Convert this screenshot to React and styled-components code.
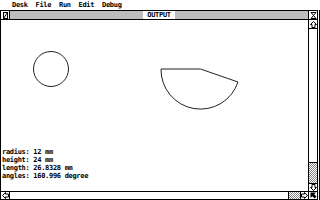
import React from "react";
import styled, { createGlobalStyle } from "styled-components";

const Global = createGlobalStyle`
  html, body { margin: 0; padding: 0; background: #fff; }
  body { font-family: "DejaVu Sans Mono", "Liberation Mono", monospace; }
`;

const checker = `repeating-conic-gradient(#8a8a8a 0 25%, #ffffff 0 50%) 0 0 / 2px 2px`;

const Screen = styled.div`
  width: 320px;
  height: 200px;
  display: flex;
  flex-direction: column;
  background: #fff;
  overflow: hidden;
  font-family: "DejaVu Sans Mono", "Liberation Mono", monospace;
  font-weight: bold;
  font-size: 7px;
  letter-spacing: -0.3px;
  color: #000;
`;

const MenuBar = styled.div`
  height: 10px;
  flex: none;
  padding-left: 12px;
  white-space: pre;
  line-height: 10px;
`;

const Desk = styled.div`
  flex: 1;
  display: flex;
  min-height: 0;
`;

const Window = styled.div`
  width: 316px;
  height: 188px;
  border: 1px solid #000;
  display: flex;
  flex-direction: column;
  background: #fff;
`;

const Edge = styled.div`
  width: 1px;
  margin-left: 1px;
  background: #000;
`;

const TitleRow = styled.div`
  height: 8px;
  flex: none;
  display: flex;
  border-bottom: 1px solid #000;
`;

const Box = styled.div`
  width: ${(p) => p.$w || 7}px;
  flex: none;
  display: flex;
  align-items: center;
  justify-content: center;
  background: #fff;
  border-left: ${(p) => (p.$bl ? "1px solid #000" : "none")};
  border-right: ${(p) => (p.$br ? "1px solid #000" : "none")};
`;

const TitleBar = styled.div`
  flex: 1;
  background: #bdbdbd;
  display: flex;
  align-items: center;
  justify-content: center;
`;

const TitleText = styled.span`
  background: #fff;
  padding: 0 4px;
  line-height: 8px;
  height: 8px;
`;

const Body = styled.div`
  flex: 1;
  display: flex;
  min-height: 0;
`;

const Content = styled.div`
  flex: 1;
  display: flex;
  flex-direction: column;
  min-width: 0;
`;

const Canvas = styled.svg`
  display: block;
  width: 307px;
  height: 128px;
  flex: none;
`;

const Lines = styled.div`
  padding-left: 1px;
`;

const Line = styled.div`
  height: 8px;
  line-height: 8px;
  white-space: pre;
`;

const VScroll = styled.div`
  width: 8px;
  flex: none;
  border-left: 1px solid #000;
  display: flex;
  flex-direction: column;
`;

const VCell = styled.div`
  height: ${(p) => p.$h}px;
  flex: ${(p) => (p.$grow ? 1 : "none")};
  display: flex;
  align-items: center;
  justify-content: center;
  background: ${(p) => (p.$track ? checker : "#fff")};
  border-bottom: ${(p) => (p.$bb ? "1px solid #000" : "none")};
  border-top: ${(p) => (p.$bt ? "1px solid #000" : "none")};
`;

const HScroll = styled.div`
  height: 7px;
  flex: none;
  border-top: 1px solid #000;
  display: flex;
`;

const HTrack = styled.div`
  width: ${(p) => p.$w}px;
  flex: ${(p) => (p.$grow ? 1 : "none")};
  background: ${(p) => (p.$track ? checker : "#fff")};
  border-right: ${(p) => (p.$br ? "1px solid #000" : "none")};
`;

const Icon = ({ children }) => (
  <svg width="7" height="7" viewBox="0 0 7 7" fill="none" stroke="#000" strokeWidth="1">
    {children}
  </svg>
);

const Closer = () => (
  <Icon>
    <rect x="1.5" y="0.5" width="4" height="6" />
    <path d="M1.5 6.5 L5.5 0.5" />
  </Icon>
);

const Fuller = () => (
  <Icon>
    <path d="M1 0.5 H6 L3.5 3.5 Z M1 6.5 H6 L3.5 3.5 Z" />
  </Icon>
);

const UpArrow = () => (
  <Icon>
    <path d="M3.5 0.5 L6.5 3.5 H5 V6.5 H2 V3.5 H0.5 Z" />
  </Icon>
);

const DownArrow = () => (
  <Icon>
    <path d="M3.5 6.5 L6.5 3.5 H5 V0.5 H2 V3.5 H0.5 Z" />
  </Icon>
);

const LeftArrow = () => (
  <Icon>
    <path d="M0.5 3.5 L3.5 0.5 V2 H6.5 V5 H3.5 V6.5 Z" />
  </Icon>
);

const RightArrow = () => (
  <Icon>
    <path d="M6.5 3.5 L3.5 0.5 V2 H0.5 V5 H3.5 V6.5 Z" />
  </Icon>
);

const Sizer = () => (
  <svg width="7" height="7" viewBox="0 0 7 7">
    <path d="M0.5 0.5 H6 L4.2 2.3 L6.5 4.6 L4.6 6.5 L2.3 4.2 L0.5 6 Z" fill="#000" />
  </svg>
);

const readout = [
  "radius: 12 mm",
  "height: 24 mm",
  "length: 26.8328 mm",
  "angles: 160.996 degree",
];

export default function App() {
  return (
    <>
      <Global />
      <Screen>
        <MenuBar>{"Desk  File  Run  Edit  Debug"}</MenuBar>
        <Desk>
          <Window>
            <TitleRow>
              <Box $w={8} $br>
                <Closer />
              </Box>
              <TitleBar>
                <TitleText>OUTPUT</TitleText>
              </TitleBar>
              <Box $w={8} $bl>
                <Fuller />
              </Box>
            </TitleRow>
            <Body>
              <Content>
                <Canvas viewBox="1 20 307 128">
                  <circle cx="51" cy="69" r="17.5" fill="none" stroke="#222" strokeWidth="1" />
                  <path
                    d="M161 69 L200.5 69 L238 82 A39.5 39.5 0 0 1 161 69"
                    fill="none"
                    stroke="#222"
                    strokeWidth="1"
                  />
                </Canvas>
                <Lines>
                  {readout.map((t) => (
                    <Line key={t}>{t}</Line>
                  ))}
                </Lines>
              </Content>
              <VScroll>
                <VCell $h={8} $bb>
                  <UpArrow />
                </VCell>
                <VCell $h={133} $bb />
                <VCell $grow $track />
                <VCell $h={7} $bt>
                  <DownArrow />
                </VCell>
              </VScroll>
            </Body>
            <HScroll>
              <Box $w={8} $br>
                <LeftArrow />
              </Box>
              <HTrack $grow $br />
              <HTrack $w={11} $track />
              <Box $w={7} $bl>
                <RightArrow />
              </Box>
              <Box $w={8} $bl>
                <Sizer />
              </Box>
            </HScroll>
          </Window>
          <Edge />
        </Desk>
      </Screen>
    </>
  );
}
